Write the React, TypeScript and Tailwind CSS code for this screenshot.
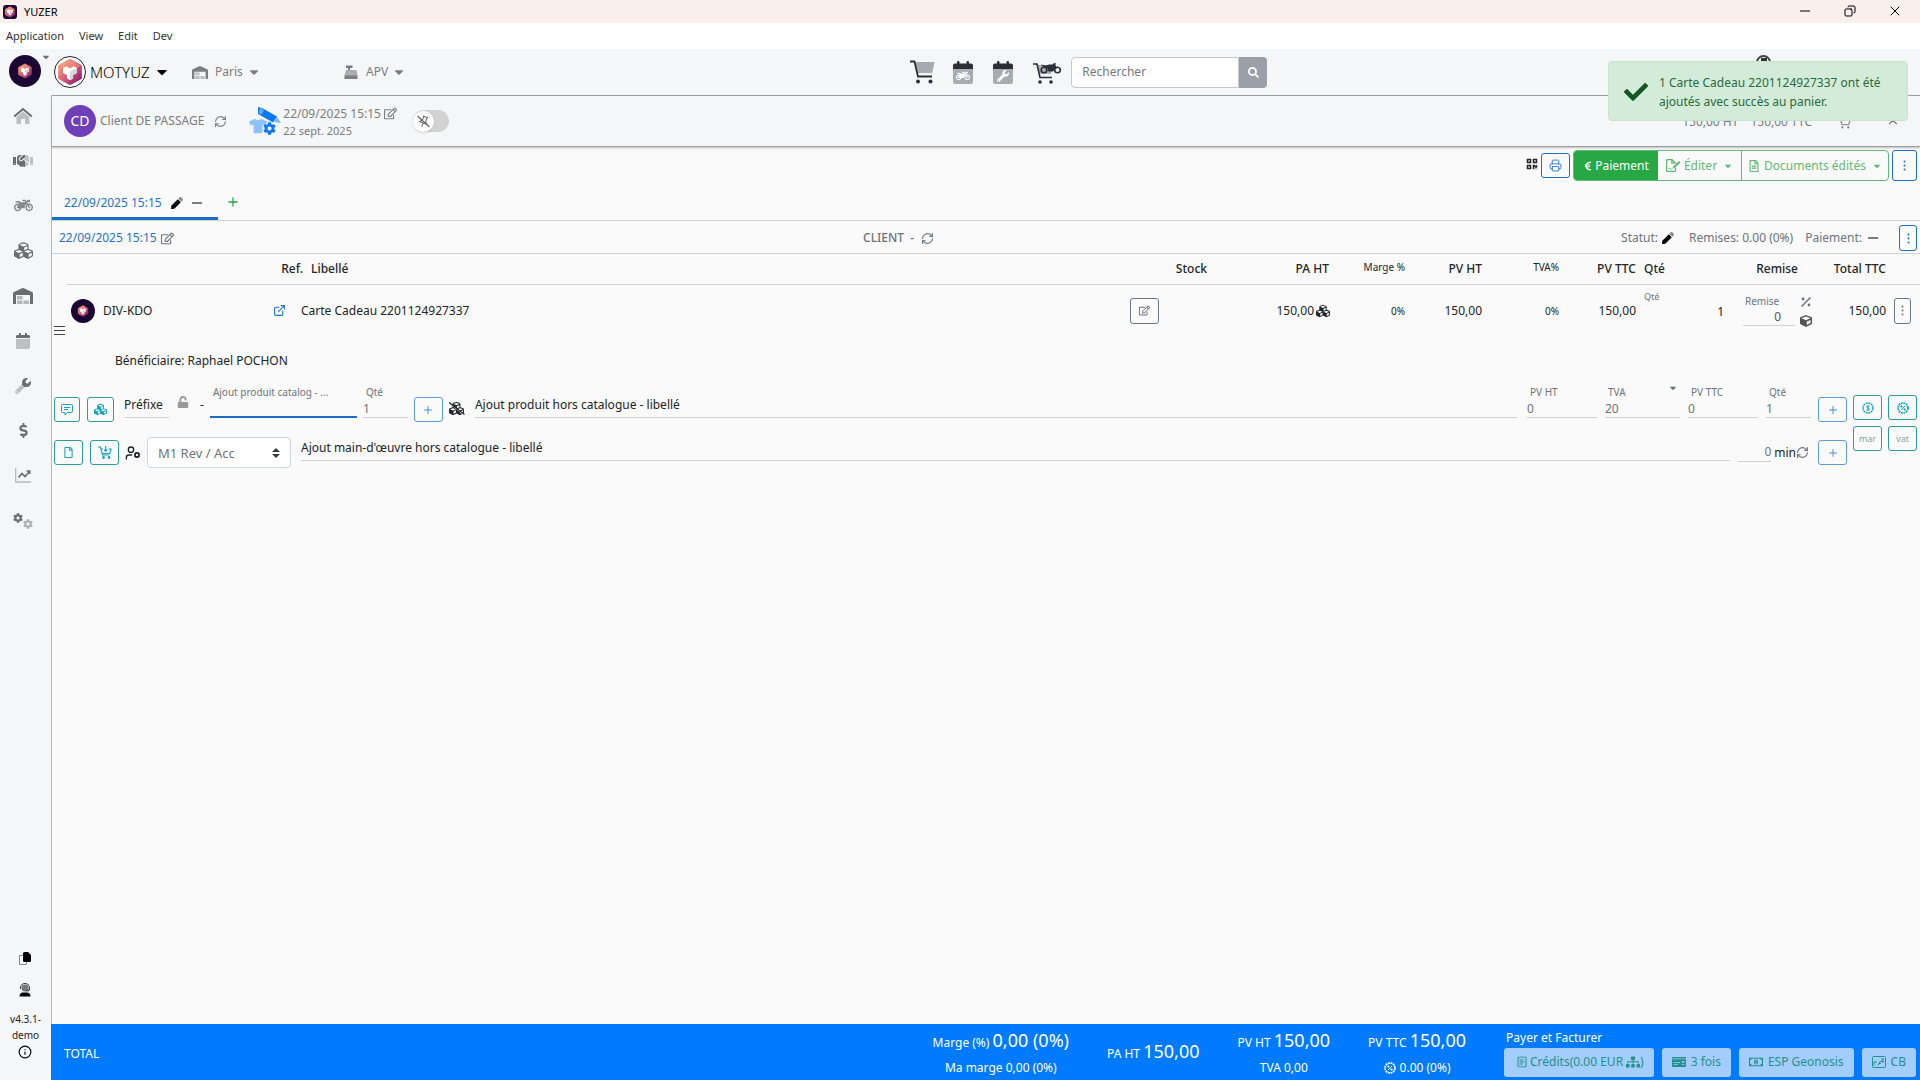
import type { ReactNode } from "react";
import {
  FaCaretDown, FaCheck, FaCog, FaCubes, FaCube, FaDollarSign, FaHandshake, FaMotorcycle, FaPen,
  FaQrcode, FaSearch, FaSitemap, FaWrench, FaRegEdit, FaRegFile, FaRegFileAlt, FaRegMoneyBillAlt, FaMoneyCheck,
  FaUnlock, FaEuroSign, FaCalendar, FaTshirt,
} from "react-icons/fa";
import {
  Printer, ExternalLink, RefreshCw, Info, UserCog, Plus,
  Minus, X, ShoppingCart, ChevronUp, ReceiptText, Copy,
} from "lucide-react";

function CubeMark({ className }: { className: string }) {
  return (
    <svg viewBox="0 0 32 32" className={className} aria-hidden="true">
      <defs>
        <linearGradient id="cube-fill" x1="0" y1="0" x2="1" y2="1">
          <stop offset="0" stopColor="#f7b178" />
          <stop offset="0.45" stopColor="#e0637a" />
          <stop offset="1" stopColor="#7a1466" />
        </linearGradient>
      </defs>
      <path d="M16 2 28.500 9v14L16 30 3.500 23V9z" fill="url(#cube-fill)" stroke="url(#cube-fill)" strokeWidth="2" strokeLinejoin="round" />
      <path d="M16 2 28.500 9 16 16 3.500 9z" fill="#f5a080" opacity="0.5" />
      <path d="m8 11.500 4-2 4 2.500 4-2.500 4 2V17l-4.500 2.500v4L16 25.500l-3.500-2v-4L8 17z" fill="#fff" />
      <path d="m16 15.500 8-4V17l-4.500 2.500v4L16 25.500z" fill="#d9d3dc" />
    </svg>
  );
}

function HomeIcon() {
  return (
    <svg viewBox="0 0 20 18" className="h-[18px] w-5" fill="currentColor" aria-hidden="true">
      <path d="M10 4.500 3.500 10v7h4.500v-5h4v5h4.500v-7z" opacity="0.4" />
      <path d="M1.200 9.500 10 2l8.800 7.500" fill="none" stroke="currentColor" strokeWidth="2" />
    </svg>
  );
}

function WarehouseIcon({ className }: { className: string }) {
  return (
    <svg viewBox="0 0 20 16" className={className} fill="currentColor" aria-hidden="true">
      <path d="M0 16V5.500Q0 4.300 1 4L9 .3q1-.5 2 0L19 4q1 .4 1 1.500V16h-3V7H3v9z" />
      <path d="M4 8h5.500v3.500H4zM4 12.500h5.500V16H4zM10.500 12.500H16V16h-5.500z" opacity="0.45" />
    </svg>
  );
}

function ChartIcon() {
  return (
    <svg viewBox="0 0 16 15" className="h-[15px] w-4" fill="none" stroke="currentColor" aria-hidden="true">
      <path d="M.7 0v14H16" strokeWidth="1.300" opacity="0.45" />
      <path d="m3.500 9.500 3.500-4 3 3 4.500-5M11.500 3h3.200v3" strokeWidth="1.700" />
    </svg>
  );
}

function GearsIcon() {
  return (
    <span className="flex items-end">
      <FaCog className="mb-1.5 size-[10px]" />
      <FaCog className="size-[10px] opacity-50" />
    </span>
  );
}

function RegisterIcon() {
  return (
    <svg viewBox="0 0 14 14" className="size-[14px]" fill="currentColor" aria-hidden="true">
      <path d="M2 .5h6.500v2.500H6V5H4V3H2z" />
      <path d="M2 5h10.500l1 5H.5z" opacity="0.6" />
      <path d="M.5 10.200h13V14H.5z" />
    </svg>
  );
}

function CartIcon() {
  return (
    <svg viewBox="0 0 25 24" className="h-6 w-[25px]" aria-hidden="true">
      <path d="M5 2h19.500l-2.300 11H8z" fill="#a9abb0" />
      <path d="M0 1.500h4.500L8 16.500h14" fill="none" stroke="#2b2f38" strokeWidth="1.800" />
      <circle cx="8" cy="21.500" r="2" fill="#2b2f38" />
      <circle cx="20.500" cy="21.500" r="2" fill="#2b2f38" />
    </svg>
  );
}

function CalendarWith({ children }: { children: ReactNode }) {
  return (
    <span className="grid">
      <svg viewBox="0 0 20 23" className="col-start-1 row-start-1 h-[23px] w-5" aria-hidden="true">
        <path d="M0 8h20v13q0 2-2 2H2q-2 0-2-2z" fill="#a9abb0" />
        <path d="M0 8V4.500q0-2 2-2h2V1q0-1 1.200-1T6.500 1v1.500h7V1q0-1 1.200-1T16 1v1.500h2q2 0 2 2V8z" fill="#2b2f38" />
      </svg>
      <span className="col-start-1 row-start-1 mt-2 flex items-center justify-center text-white">{children}</span>
    </span>
  );
}

function BikeCartIcon() {
  return (
    <svg viewBox="0 0 28 23" className="h-[23px] w-7" aria-hidden="true">
      <path d="M5 4h15l-2 9H7z" fill="#a9abb0" />
      <path d="M0 3h4l3 13.500h12" fill="none" stroke="#2b2f38" strokeWidth="1.700" />
      <circle cx="7" cy="21" r="1.800" fill="#2b2f38" />
      <circle cx="18" cy="21" r="1.800" fill="#2b2f38" />
      <g fill="none" stroke="#2b2f38" strokeWidth="1.600">
        <circle cx="11" cy="9" r="2.800" />
        <circle cx="24.500" cy="9" r="2.800" />
      </g>
      <path d="m8 3.500 5 1 3-1h3.500L21 2l2 .5-.7 1.500 2 3-2.300 1-2 2.500h-4.500l-1.500-3.500-5-2z" fill="#2b2f38" />
    </svg>
  );
}

function CartDownIcon() {
  return (
    <svg viewBox="0 0 14 13" className="h-[13px] w-[14px]" fill="none" stroke="currentColor" strokeWidth="1.100" aria-hidden="true">
      <path d="M0 1h2.500l2 8h7M3 3h2M10.500 3H13l-1.300 4.500H4M7.700 0v5M6 3.500l1.700 2 1.700-2" />
      <circle cx="5.500" cy="11.500" r="0.900" />
      <circle cx="11" cy="11.500" r="0.900" />
    </svg>
  );
}

function CommentIcon() {
  return (
    <svg viewBox="0 0 12 12" className="size-3" fill="none" stroke="currentColor" aria-hidden="true">
      <path d="M1.500.5h9q1 0 1 1v6q0 1-1 1h-4L4 11V8.500H1.500q-1 0-1-1v-6q0-1 1-1zM3 3.500h6M3 5.500h4" strokeLinejoin="round" />
    </svg>
  );
}

function EditDocIcon() {
  return (
    <svg viewBox="0 0 15 13" className="mr-[3px] h-[13px] w-[15px]" fill="none" stroke="currentColor" strokeWidth="1.300" aria-hidden="true">
      <path d="M9.500 9v2.400q0 1-1 1H1.600q-1 0-1-1V1.600q0-1 1-1H6L9.500 4M5.800.6v3.600h3.500" />
      <path d="M14.500 3.500 9 8.800l-2.200.6.6-2.200 5.600-5.300z" fill="currentColor" stroke="none" />
      <path d="M2.500 10q1-2 1.800 0 .8.400 2.200 0" strokeWidth="0.900" />
    </svg>
  );
}

function DiscountBadge() {
  return (
    <svg viewBox="0 0 12 12" className="size-3" fill="none" stroke="currentColor" aria-hidden="true">
      <circle cx="6" cy="6" r="5" strokeWidth="1.600" strokeDasharray="2 0.600" />
      <path d="m4 8 4-4" />
      <circle cx="4.300" cy="4.500" r="0.700" fill="currentColor" />
      <circle cx="7.700" cy="7.500" r="0.700" fill="currentColor" />
    </svg>
  );
}

function DollarBadge() {
  return (
    <svg viewBox="0 0 12 12" className="size-3" fill="none" stroke="currentColor" aria-hidden="true">
      <circle cx="6" cy="6" r="5" strokeWidth="1.400" strokeDasharray="2 0.600" />
      <path d="M7.600 4.300Q6 3.200 4.900 4.300T6 6t1.200 1.700T4.400 7.700M6 2.800v6.400" strokeWidth="0.900" />
    </svg>
  );
}

function UnpinIcon() {
  return (
    <svg viewBox="0 0 13 13" className="size-[13px]" fill="none" stroke="#666" aria-hidden="true">
      <path d="M4 1.500h5.500M5 1.500v4L3 8h7.500L8.500 5.500v-4M6.700 8v4" transform="rotate(20 6.500 6.500)" />
      <path d="m.5 1 12 11" strokeWidth="1.200" />
    </svg>
  );
}

function SupportIcon() {
  return (
    <svg viewBox="0 0 12 14" className="h-[14px] w-3" aria-hidden="true">
      <circle cx="6" cy="5" r="3.500" fill="#777" />
      <path d="M1.500 6V5a4.500 4.500 0 0 1 9 0v1.500Q10 8 7 8" fill="none" stroke="#444" strokeWidth="1.100" />
      <path d="M.5 13.500q0-3.500 3-4h5q3 .5 3 4z" fill="#000" />
    </svg>
  );
}

function CopyIcon() {
  return (
    <svg viewBox="0 0 12 13" className="h-[13px] w-3" aria-hidden="true">
      <path d="M4 3.500H.5v9h7V10" fill="none" stroke="#888" />
      <path d="M4 1.500Q4 0 5.500 0H9l3 3v5.500Q12 10 10.500 10h-5Q4 10 4 8.500z" fill="#000" />
    </svg>
  );
}

function PercentIcon() {
  return (
    <svg viewBox="0 0 10 10" className="size-2.5" fill="currentColor" aria-hidden="true">
      <path d="M.5 9.500 9.500.5" stroke="currentColor" strokeWidth="1.500" />
      <circle cx="2" cy="2" r="1.400" />
      <circle cx="8" cy="8" r="1.400" />
    </svg>
  );
}

function CubesSlash() {
  return (
    <span className="grid text-[#212529]">
      <FaCubes className="col-start-1 row-start-1 size-[15px]" />
      <svg viewBox="0 0 16 14" className="col-start-1 row-start-1 h-[14px] w-4" aria-hidden="true">
        <path d="M1 2.500 15 14" stroke="#fafafa" strokeWidth="1" />
        <path d="M0 1.500 15.500 13.500" stroke="#212529" strokeWidth="1.200" />
      </svg>
    </span>
  );
}

function OrderIcon() {
  return (
    <span className="grid h-7 w-8">
      <FaTshirt className="col-start-1 row-start-1 mt-2.5 size-[18px] text-[#8fc2fb]" />
      <svg viewBox="0 0 32 28" className="col-start-1 row-start-1 h-7 w-8" fill="#0a78f0" aria-hidden="true">
        <path d="m9 0 5 1.500 14 8-4 6L9 7z" />
        <path d="m28 10 4 6-7-1z" opacity="0.5" />
        <path d="m11 1 4 2-2.500 5-3-2z" fill="#5da8f8" />
      </svg>
      <FaCog className="col-start-1 row-start-1 mt-[15px] ml-[14px] size-[13px] text-[#0a78f0]" />
    </span>
  );
}

function PenIcon() {
  return <FaPen className="size-3 text-black [mask-image:linear-gradient(225deg,rgba(0,0,0,0.45)_32%,#000_32%)]" />;
}

function DotsIcon() {
  return (
    <svg viewBox="0 0 3 11" className="h-[11px] w-[3px]" fill="currentColor" aria-hidden="true">
      <circle cx="1.500" cy="1.500" r="1" /><circle cx="1.500" cy="5.500" r="1" /><circle cx="1.500" cy="9.500" r="1" />
    </svg>
  );
}

function HandleIcon() {
  return (
    <svg viewBox="0 0 11 10" className="h-2.5 w-[11px]" stroke="#444" aria-hidden="true">
      <path d="M0 .5h11M0 4.500h11M0 8.500h11" />
    </svg>
  );
}

const sideLinks: { label: string; icon: ReactNode }[] = [
  { label: "Accueil", icon: <HomeIcon /> },
  { label: "Clients", icon: <FaHandshake className="size-5 [mask-image:linear-gradient(90deg,#000_60%,rgba(0,0,0,0.4)_60%)]" /> },
  { label: "Véhicules", icon: <FaMotorcycle className="size-[19px] opacity-80" /> },
  { label: "Stock", icon: <FaCubes className="size-[19px]" /> },
  { label: "Magasin", icon: <WarehouseIcon className="h-4 w-5" /> },
  { label: "Agenda", icon: <FaCalendar className="size-4 [mask-image:linear-gradient(180deg,#000_36%,rgba(0,0,0,0.4)_36%)]" /> },
  { label: "Atelier", icon: <FaWrench className="size-4 [mask-image:linear-gradient(225deg,#000_50%,rgba(0,0,0,0.4)_50%)]" /> },
  { label: "Comptabilité", icon: <FaDollarSign className="size-[15px]" /> },
  { label: "Statistiques", icon: <ChartIcon /> },
  { label: "Réglages", icon: <GearsIcon /> },
];

function Sidebar() {
  return (
    <aside className="flex w-[51px] shrink-0 flex-col items-center text-[#6b6d70]">
      <div className="flex h-11 w-full items-center pl-[9px]">
        <button aria-label="Yuzer" className="flex size-8 shrink-0 items-center justify-center rounded-full bg-[#1a0733]">
          <CubeMark className="size-4" />
        </button>
        <FaCaretDown className="mb-7 size-2.5 shrink-0" />
      </div>
      <nav className="flex w-full flex-col pr-[5px]">
        {sideLinks.map((l) => (
          <a key={l.label} href="#" aria-label={l.label} className="flex h-[45px] items-center justify-center">
            {l.icon}
          </a>
        ))}
      </nav>
      <div className="mt-auto flex flex-col items-center pb-[21px] text-[11px] leading-4 text-[#222]">
        <a href="#" aria-label="Copier" className="mb-[18px]"><CopyIcon /></a>
        <a href="#" aria-label="Support" className="mb-3.5"><SupportIcon /></a>
        <span className="text-center text-[10px]">v4.3.1-<br />demo</span>
        <a href="#" aria-label="Informations" className="mt-0.5"><Info className="size-[14px] text-black" /></a>
      </div>
    </aside>
  );
}

function Header() {
  return (
    <header className="flex h-[46px] items-center pl-[3px]">
      <div className="flex flex-[17] items-center">
        <button className="flex w-[134px] items-center text-[15px] font-light text-black">
          <span className="mr-1 flex size-8 items-center justify-center rounded-full border border-[#222] bg-white">
            <CubeMark className="size-7" />
          </span>
          MOTYUZ
          <FaCaretDown className="ml-1 size-4" />
        </button>
        <button className="flex w-[156px] items-center text-[#7b7d80]">
          <WarehouseIcon className="mr-[7px] ml-1 h-[13px] w-4" />
          Paris
          <FaCaretDown className="ml-1 size-3.5" />
        </button>
        <button className="flex items-center text-[#7b7d80]">
          <RegisterIcon />
          <span className="ml-2">APV</span>
          <FaCaretDown className="ml-1 size-3.5" />
        </button>
      </div>
      <nav className="flex items-center gap-[18px] pr-2.5">
        <a href="#" aria-label="Panier"><CartIcon /></a>
        <a href="#" aria-label="Agenda véhicules"><CalendarWith><FaMotorcycle className="size-3.5" /></CalendarWith></a>
        <a href="#" aria-label="Agenda atelier" className="mx-0.5"><CalendarWith><FaWrench className="size-3" /></CalendarWith></a>
        <a href="#" aria-label="Panier véhicules"><BikeCartIcon /></a>
      </nav>
      <form className="flex h-[31px]">
        <input aria-label="Rechercher" placeholder="Rechercher" className="w-[168px] rounded-l border border-[#c5c8cc] bg-white px-2.5 placeholder:text-[#74787d]" />
        <button type="button" aria-label="Lancer la recherche" className="flex w-7 items-center justify-center rounded-r bg-[#9b9fa7] text-white">
          <FaSearch className="size-[11px]" />
        </button>
      </form>
      <div className="flex flex-[10] justify-end self-start pt-1.5 pr-[149px]">
        <span className="flex size-[15px] items-center justify-center rounded-full border-2 border-[#444]">
          <span className="mb-1 size-1.5 bg-[#333]" />
        </span>
      </div>
    </header>
  );
}

function ClientBar() {
  return (
    <section className="relative flex h-[52px] items-center border-y border-[#9c9fa1] pl-3 text-[#7b7d80] shadow-[0_1px_2px_rgba(0,0,0,0.25)]">
      <span className="flex size-8 items-center justify-center rounded-full bg-[#6f3fb8] text-sm text-white">CD</span>
      <span className="ml-1">Client DE PASSAGE</span>
      <button aria-label="Actualiser le client" className="ml-2.5"><RefreshCw className="size-[13px]" strokeWidth={2} /></button>
      <span className="mr-0.5 ml-[22px]"><OrderIcon /></span>
      <div className="flex flex-col">
        <span className="flex items-center gap-[3px] leading-[19px]">22/09/2025 15:15 <FaRegEdit className="size-[13px]" /></span>
        <span className="text-[11px] leading-4">22 sept. 2025</span>
      </div>
      <label className="ml-4 flex h-[22px] w-9 items-center rounded-full bg-[#d2d2d2]">
        <input type="checkbox" aria-label="Épingler" className="sr-only" />
        <span className="flex size-[21px] items-center justify-center rounded-full bg-white shadow">
          <UnpinIcon />
        </span>
      </label>
      <div className="ml-auto flex items-center pt-0.5 pr-5">
        <span className="mr-3">150,00 HT</span>
        <span className="mr-[26px]">150,00 TTC</span>
        <ShoppingCart className="mr-[35px] size-[13px]" />
        <ChevronUp className="size-3.5" />
      </div>
    </section>
  );
}

function Dots({ className }: { className: string }) {
  return (
    <button aria-label="Plus d'options" className={`flex items-center justify-center rounded-[3px] border ${className}`}>
      <DotsIcon />
    </button>
  );
}

function Toolbar() {
  return (
    <div className="flex h-[37px] items-center justify-end pr-[3px]">
      <FaQrcode className="mr-[3px] mb-1 size-3 text-[#222]" />
      <button aria-label="Imprimer" className="mr-[3px] flex h-[25px] w-[29px] items-center justify-center rounded-[3px] border border-[#1f6fc4] text-[#1f6fc4]">
        <Printer className="size-[13px]" strokeWidth={1.6} />
      </button>
      <div className="mr-[3px] flex h-[31px] rounded border border-[#63b877] text-[#63b877]">
        <button className="flex w-[84px] items-center justify-center rounded-l-[3px] bg-[#28a745] text-white">
          <FaEuroSign className="mr-0.5 size-2.5" />Paiement
        </button>
        <button className="flex w-[84px] items-center justify-center border-r border-[#63b877]">
          <EditDocIcon />Éditer<FaCaretDown className="ml-1.5 size-2.5" />
        </button>
        <button className="flex w-[146px] items-center justify-center">
          <FaRegFileAlt className="mr-1 size-3" />Documents édités<FaCaretDown className="ml-1.5 size-2.5" />
        </button>
      </div>
      <Dots className="h-[31px] w-[25px] border-[#1f6fc4] text-[#1f6fc4]" />
    </div>
  );
}

function Tabs() {
  return (
    <div className="flex h-[37px] items-stretch border-b border-[#cfd1d3]">
      <div role="tablist" className="flex w-[166px] items-center border-b-[3px] border-[#1a6dc8] pt-1 pl-3">
        <button role="tab" aria-selected="true" className="text-[#2a72c8]">22/09/2025 15:15</button>
        <span className="mr-1.5 ml-[9px]"><PenIcon /></span>
        <Minus className="size-4 text-black" strokeWidth={1.6} />
      </div>
      <button aria-label="Ajouter un onglet" className="ml-2 text-[#28a745]"><Plus className="size-[14px]" strokeWidth={2.2} /></button>
    </div>
  );
}

function StatusBar() {
  return (
    <div className="flex h-[33px] items-center border-b border-[#cfd1d3] pt-0.5 text-[#6c757d]">
      <div className="flex flex-[9] items-center gap-1 pl-[7px]">
        <span className="text-[#2a72c8]">22/09/2025 15:15</span>
        <button aria-label="Modifier"><FaRegEdit className="size-[13px]" /></button>
      </div>
      <div className="flex items-center font-medium">
        CLIENT&nbsp; -
        <RefreshCw className="ml-[7px] size-[13px]" strokeWidth={2} />
      </div>
      <div className="flex flex-[11] items-center justify-end pr-[3px]">
        <span className="mr-1">Statut:</span><PenIcon />
        <span className="mr-3 ml-[15px]">Remises: 0.00 (0%)</span>
        <span>Paiement:</span>
        <Minus className="mr-[18px] ml-[3px] size-4 text-black" strokeWidth={1.6} />
        <Dots className="h-[26px] w-[18px] border-[#1f6fc4] text-[#1f6fc4]" />
      </div>
    </div>
  );
}

function Lines() {
  const th = "border-b border-[#cfd1d3] px-1 text-right font-medium";
  return (
    <table className="w-full table-fixed text-[#212529]">
      <colgroup>
        <col className="w-[15px]" /><col className="w-[240px]" /><col /><col className="w-[90px]" /><col className="w-[122px]" />
        <col className="w-[76px]" /><col className="w-[77px]" /><col className="w-[77px]" /><col className="w-[77px]" />
        <col className="w-[88px]" /><col className="w-[88px]" /><col className="w-[74px]" /><col className="w-[30px]" />
      </colgroup>
      <thead>
        <tr className="h-[30px]">
          <td />
          <th className={th}>Ref.</th>
          <th className="border-b border-[#cfd1d3] px-1 text-left font-medium">Libellé</th>
          <th className={th}>Stock</th>
          <th className={th}>PA HT</th>
          <th className="border-b border-[#cfd1d3] px-1 pb-1 text-right text-[10px] font-normal">Marge %</th>
          <th className={th}>PV HT</th>
          <th className="border-b border-[#cfd1d3] px-1 pb-1 text-right text-[10px] font-normal">TVA%</th>
          <th className={th}>PV TTC</th>
          <th className="border-b border-[#cfd1d3] px-1 text-left font-medium">Qté</th>
          <th className="border-b border-[#cfd1d3] pr-[18px] text-right font-medium">Remise</th>
          <th className={th}>Total TTC</th>
          <td className="border-b border-[#cfd1d3]" />
        </tr>
      </thead>
      <tbody>
        <tr className="h-[53px]">
          <td rowSpan={2} className="pb-1 pl-0.5"><HandleIcon /></td>
          <td className="pr-[21px] pl-1">
            <div className="flex items-center">
              <span className="mr-2 flex size-6 items-center justify-center rounded-full bg-[#1a0733]"><CubeMark className="size-3" /></span>
              DIV-KDO
              <a href="#" aria-label="Ouvrir l'article" className="ml-auto text-[#1f6fc4]"><ExternalLink className="size-[13px]" /></a>
            </div>
          </td>
          <td colSpan={2} className="pr-[52px]">
            <div className="flex items-center justify-between">
              <span className="-ml-1.5">Carte Cadeau 2201124927337</span>
              <button aria-label="Modifier le libellé" className="flex h-[26px] w-[29px] items-center justify-center rounded-[3px] border border-[#6c757d] text-[#6c757d]">
                <FaRegEdit className="size-[11px]" />
              </button>
            </div>
          </td>
          <td className="pr-[3px]"><span className="flex items-center justify-end gap-0.5">150,00<FaCubes className="size-[14px]" /></span></td>
          <td className="px-1 text-right text-[10px]">0%</td>
          <td className="px-1 text-right">150,00</td>
          <td className="px-1 text-right text-[10px]">0%</td>
          <td className="px-1 text-right">150,00</td>
          <td className="pl-1">
            <label className="flex flex-col">
              <span className="text-[9px] leading-3 text-[#6c757d]">Qté</span>
              <input defaultValue="1" className="mb-2.5 h-[17px] w-full bg-transparent pr-1 text-right" />
            </label>
          </td>
          <td>
            <div className="flex items-center justify-end gap-[5px] pr-1">
              <label className="flex w-[52px] flex-col pb-0.5">
                <span className="pl-[2px] text-[10px] leading-4 text-[#6c757d]">Remise</span>
                <input defaultValue="0" className="h-[17px] w-full border-b border-[#cfd1d3] bg-transparent pr-3.5 text-right text-[#555]" />
              </label>
              <span className="flex flex-col items-center gap-2 pt-0.5 text-[#6c757d]">
                <PercentIcon /><FaCube className="size-3 text-[#555]" />
              </span>
            </div>
          </td>
          <td className="px-1 text-right">150,00</td>
          <td className="pl-1"><Dots className="h-[26px] w-[17px] border-[#6c757d] text-[#6c757d]" /></td>
        </tr>
        <tr className="h-11">
          <td colSpan={12} className="pt-1 pl-12">Bénéficiaire: Raphael POCHON</td>
        </tr>
      </tbody>
    </table>
  );
}

function Field({ label, value, className, children }: { label: string; value: string; className: string; children?: ReactNode }) {
  return (
    <label className={`flex h-[35px] flex-col border-b border-[#cfd1d3] text-[#6c757d] ${className}`}>
      <span className="flex justify-between pl-[3px] text-[10px] leading-[18px]">{label}{children}</span>
      <input defaultValue={value} className="h-4 w-full bg-transparent" />
    </label>
  );
}

function Teal({ label, className, children }: { label: string; className: string; children: ReactNode }) {
  return (
    <button aria-label={label} className={`flex h-[25px] items-center justify-center rounded-[3px] border border-[#2a9d9f] text-[#17a2b8] ${className}`}>
      {children}
    </button>
  );
}

function AddButton() {
  return (
    <button aria-label="Ajouter" className="flex h-[25px] w-[29px] shrink-0 items-center justify-center rounded-[3px] border border-[#5c9be0] text-[#4a90e2]">
      <Plus className="size-3" />
    </button>
  );
}

function AddRows() {
  return (
    <div className="flex gap-1.5 pr-[3px] pl-0.5 text-[#212529]">
      <div className="flex min-w-0 flex-1 flex-col gap-[15px]">
        <div className="flex h-[41px] items-end">
          <Teal label="Commentaire" className="mr-[7px] w-[26px]"><CommentIcon /></Teal>
          <Teal label="Lots" className="mr-2.5 w-[27px]"><FaCubes className="size-[13px]" /></Teal>
          <input aria-label="Préfixe" placeholder="Préfixe" className="mb-1 h-[26px] w-[45px] border-b border-[#cfd1d3] bg-transparent placeholder:text-[#212529]" />
          <FaUnlock className="mb-3.5 ml-2 size-3 text-[#999]" />
          <span className="mr-1.5 ml-[11px] mb-2">-</span>
          <label className="mb-1 flex h-[35px] w-[147px] flex-col border-b-2 border-[#1a6dc8]">
            <span className="pl-[3px] text-[10px] leading-[18px] text-[#6c757d]">Ajout produit catalog - ...</span>
            <input className="h-[15px] w-full bg-transparent" />
          </label>
          <Field label="Qté" value="1" className="mx-1.5 mb-1 w-[45px]" />
          <AddButton />
          <span className="mr-2.5 ml-1.5 mb-1.5"><CubesSlash /></span>
          <input aria-label="Ajout produit hors catalogue - libellé" placeholder="Ajout produit hors catalogue - libellé" className="mb-1 h-[26px] min-w-0 flex-1 border-b border-[#cfd1d3] bg-transparent placeholder:text-[#212529]" />
          <Field label="PV HT" value="0" className="mb-1 ml-2.5 w-[70px]" />
          <Field label="TVA" value="20" className="mb-1 ml-2 w-[75px]"><FaCaretDown className="mr-0.5 size-2.5" /></Field>
          <Field label="PV TTC" value="0" className="mb-1 ml-2 w-[70px]" />
          <Field label="Qté" value="1" className="mr-[7px] mb-1 ml-2 w-[45px]" />
          <AddButton />
        </div>
        <div className="flex h-[31px] items-center">
          <Teal label="Document" className="mr-[7px] w-[29px]"><FaRegFile className="size-[11px]" /></Teal>
          <Teal label="Importer un panier" className="mr-1.5 w-[29px]"><CartDownIcon /></Teal>
          <UserCog className="mr-1.5 size-4" />
          <span className="mr-2.5 grid h-[31px] w-[144px] items-center rounded border border-[#ced4da] bg-white">
            <select aria-label="Main-d'œuvre" className="col-start-1 row-start-1 h-full appearance-none bg-transparent px-2.5 text-[13px] text-[#6c757d]">
              <option>M1 Rev / Acc</option>
            </select>
            <svg viewBox="0 0 8 10" className="pointer-events-none col-start-1 row-start-1 mr-2.5 h-2.5 w-2 justify-self-end" fill="#343a40" aria-hidden="true">
              <path d="M4 0 8 4H0zM4 10 0 6h8z" />
            </svg>
          </span>
          <input aria-label="Ajout main-d'œuvre hors catalogue - libellé" placeholder="Ajout main-d'œuvre hors catalogue - libellé" className="mb-2.5 h-[26px] min-w-0 flex-1 border-b border-[#cfd1d3] bg-transparent placeholder:text-[#212529]" />
          <input aria-label="Durée" defaultValue="0" className="ml-2 h-[18px] w-[33px] border-b border-[#cfd1d3] bg-transparent text-right text-[#6c757d]" />
          <span className="ml-[3px]">min</span>
          <RefreshCw className="mr-[9px] size-[13px] text-[#6c757d]" strokeWidth={2} />
          <AddButton />
        </div>
      </div>
      <div className="mt-3.5 grid grid-cols-2 content-start gap-1.5 text-[9px]">
        <Teal label="Remise en montant" className="w-[29px]"><DollarBadge /></Teal>
        <Teal label="Remise en pourcentage" className="w-[29px]"><DiscountBadge /></Teal>
        <Teal label="mar" className="w-[29px]"><span className="text-[#7fa9a8]">mar</span></Teal>
        <Teal label="vat" className="w-[29px]"><span className="text-[#7fa9a8]">vat</span></Teal>
      </div>
    </div>
  );
}

function PayButton({ children }: { children: ReactNode }) {
  return (
    <button className="flex h-[29px] items-center rounded-[3px] bg-[#a3cdfb] px-2.5 text-[#258f8c]">{children}</button>
  );
}

function Amount({ label, value }: { label: string; value: string }) {
  return (
    <span className="leading-[26px]">{label} <span className="text-lg leading-[26px]">{value}</span></span>
  );
}

function TotalBar() {
  return (
    <footer className="flex h-14 items-center bg-[#007bff] pr-1 pl-[13px] text-white">
      <span className="mt-1 mr-auto">TOTAL</span>
      <div className="flex flex-col items-center pt-0.5">
        <Amount label="Marge (%)" value="0,00 (0%)" />
        <span className="leading-6">Ma marge 0,00 (0%)</span>
      </div>
      <div className="mx-[38px]"><Amount label="PA HT" value="150,00" /></div>
      <div className="flex flex-col items-center pt-0.5">
        <Amount label="PV HT" value="150,00" />
        <span className="leading-6">TVA 0,00</span>
      </div>
      <div className="mx-[38px] flex flex-col items-center pt-0.5">
        <Amount label="PV TTC" value="150,00" />
        <span className="flex items-center gap-1 leading-6"><DiscountBadge />0.00 (0%)</span>
      </div>
      <div className="flex flex-col">
        <span className="pl-0.5 leading-5">Payer et Facturer</span>
        <div className="flex gap-2">
          <PayButton><ReceiptText className="mr-0.5 ml-0.5 size-3" />Crédits(0.00 EUR <FaSitemap className="ml-[3px] size-3.5" />)</PayButton>
          <PayButton><FaMoneyCheck className="mr-[5px] size-3.5" />3 fois</PayButton>
          <PayButton><FaRegMoneyBillAlt className="mr-[5px] size-3.5" />ESP Geonosis</PayButton>
          <PayButton>
            <svg viewBox="0 0 14 12" className="mr-[5px] h-3 w-3.5" fill="none" stroke="currentColor" aria-hidden="true">
              <rect x="0.500" y="0.500" width="13" height="11" rx="1" />
              <path d="M2 9.500V6h3M6 9.500l2-4h3.500M7 7.500h2M11 3v4M9 3h3" />
            </svg>
            CB
          </PayButton>
        </div>
      </div>
    </footer>
  );
}

function Toast() {
  return (
    <div role="status" className="absolute top-[61px] right-3 flex h-[60px] w-[300px] items-center rounded border border-[#c3e6cb] bg-[#d3ecda] pt-0.5 pl-[15px] text-[#2b6a3b]">
      <FaCheck className="mr-[11px] size-6 text-[#155724]" />
      <p className="leading-[19px]">1 Carte Cadeau 2201124927337 ont été<br />ajoutés avec succès au panier.</p>
    </div>
  );
}

export default function App() {
  return (
    <div className="relative flex min-h-screen flex-col bg-[#f5f6f8] font-['Noto_Sans',sans-serif] text-[12px] leading-[18px]">
      <div className="flex h-[23px] items-center bg-[#f9f0eb] pl-[3px] text-[11px] text-black">
        <span className="mr-[7px] flex size-[14px] items-center justify-center rounded-[3px] bg-[#1a0733]"><CubeMark className="size-3" /></span>
        YUZER
        <div className="ml-auto flex items-center gap-[31px] pr-[17px] pb-0.5">
          <button aria-label="Réduire"><Minus className="size-4" strokeWidth={1.5} /></button>
          <button aria-label="Restaurer"><Copy className="size-3 -scale-x-100" strokeWidth={2} /></button>
          <button aria-label="Fermer"><X className="size-4" strokeWidth={1.5} /></button>
        </div>
      </div>
      <nav className="flex h-[26px] items-center gap-[15px] bg-white pl-1.5 text-[11px] text-[#333]">
        <a href="#">Application</a><a href="#">View</a><a href="#">Edit</a><a href="#">Dev</a>
      </nav>
      <div className="flex flex-1">
        <Sidebar />
        <div className="flex min-w-0 flex-1 flex-col">
          <Header />
          <div className="flex flex-1 flex-col border-l border-[#b5b7b9]">
            <ClientBar />
            <main className="flex flex-1 flex-col bg-[#fafafa]">
              <Toolbar />
              <Tabs />
              <StatusBar />
              <Lines />
              <AddRows />
            </main>
          </div>
          <TotalBar />
        </div>
      </div>
      <Toast />
    </div>
  );
}
